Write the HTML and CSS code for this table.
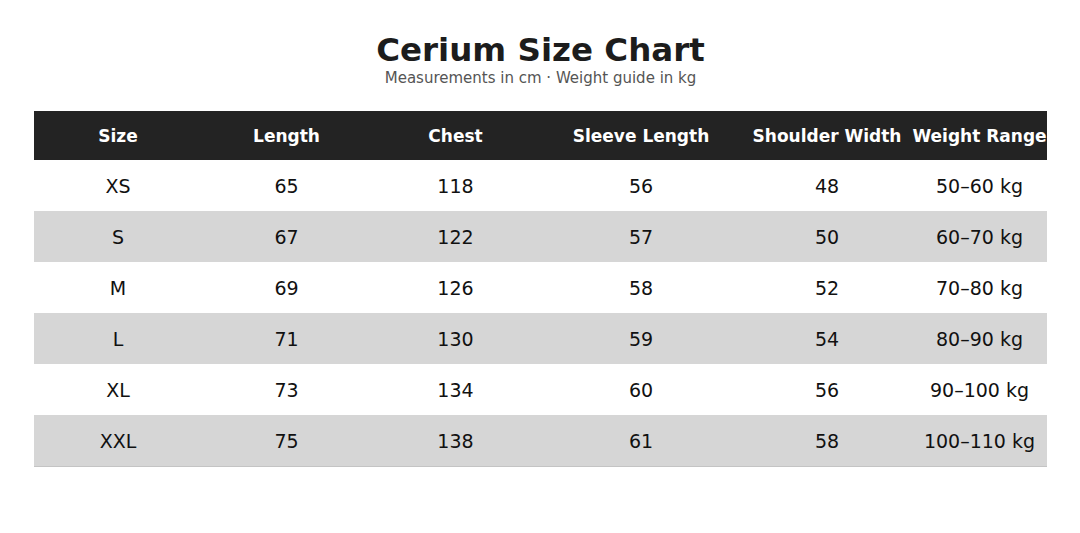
FILE: index.html
```html
<!DOCTYPE html>
<html>
<head>
<meta charset="utf-8">
<link rel="stylesheet" href="styles.css">
</head>
<body>
<div class="page">
  <header class="head">
    <h1 class="title">Cerium Size Chart</h1>
    <p class="subtitle">Measurements in cm · Weight guide in kg</p>
  </header>
  <table class="chart">
    <colgroup>
      <col class="c1"><col class="c2"><col class="c3"><col class="c4"><col class="c5"><col class="c6">
    </colgroup>
    <thead>
      <tr><th>Size</th><th>Length</th><th>Chest</th><th>Sleeve Length</th><th>Shoulder Width</th><th>Weight Range</th></tr>
    </thead>
    <tbody>
      <tr><td>XS</td><td>65</td><td>118</td><td>56</td><td>48</td><td>50–60 kg</td></tr>
      <tr><td>S</td><td>67</td><td>122</td><td>57</td><td>50</td><td>60–70 kg</td></tr>
      <tr><td>M</td><td>69</td><td>126</td><td>58</td><td>52</td><td>70–80 kg</td></tr>
      <tr><td>L</td><td>71</td><td>130</td><td>59</td><td>54</td><td>80–90 kg</td></tr>
      <tr><td>XL</td><td>73</td><td>134</td><td>60</td><td>56</td><td>90–100 kg</td></tr>
      <tr><td>XXL</td><td>75</td><td>138</td><td>61</td><td>58</td><td>100–110 kg</td></tr>
    </tbody>
  </table>
</div>
</body>
</html>
```
FILE: styles.css
```css
html, body {
  margin: 0;
  padding: 0;
  background: #ffffff;
}
body {
  font-family: "DejaVu Sans", sans-serif;
  color: #111;
}
.page {
  padding: 30px 33px 0 34px;
}
.head {
  text-align: center;
  margin-bottom: 25px;
}
.title {
  margin: 0;
  font-size: 32.5px;
  font-weight: bold;
  line-height: 40px;
  color: #1c1c1c;
}
.subtitle {
  margin: 0;
  font-size: 15px;
  line-height: 16px;
  color: #555;
}
.chart {
  width: 1013px;
  border-collapse: collapse;
  table-layout: fixed;
}
.c1 { width: 168px; }
.c2 { width: 169px; }
.c3 { width: 169px; }
.c4 { width: 202px; }
.c5 { width: 170px; }
.c6 { width: 135px; }
.chart th {
  background: #232323;
  color: #fff;
  font-size: 17px;
  font-weight: bold;
  height: 49px;
  padding: 0;
  text-align: center;
  white-space: nowrap;
}
.chart td {
  height: 51px;
  padding: 0;
  text-align: center;
  font-size: 19px;
  color: #111;
  white-space: nowrap;
}
.chart tbody tr:nth-child(even) td {
  background: #d6d6d6;
}
.chart tbody tr:last-child td {
  border-bottom: 1px solid #c4c4c4;
}
```
